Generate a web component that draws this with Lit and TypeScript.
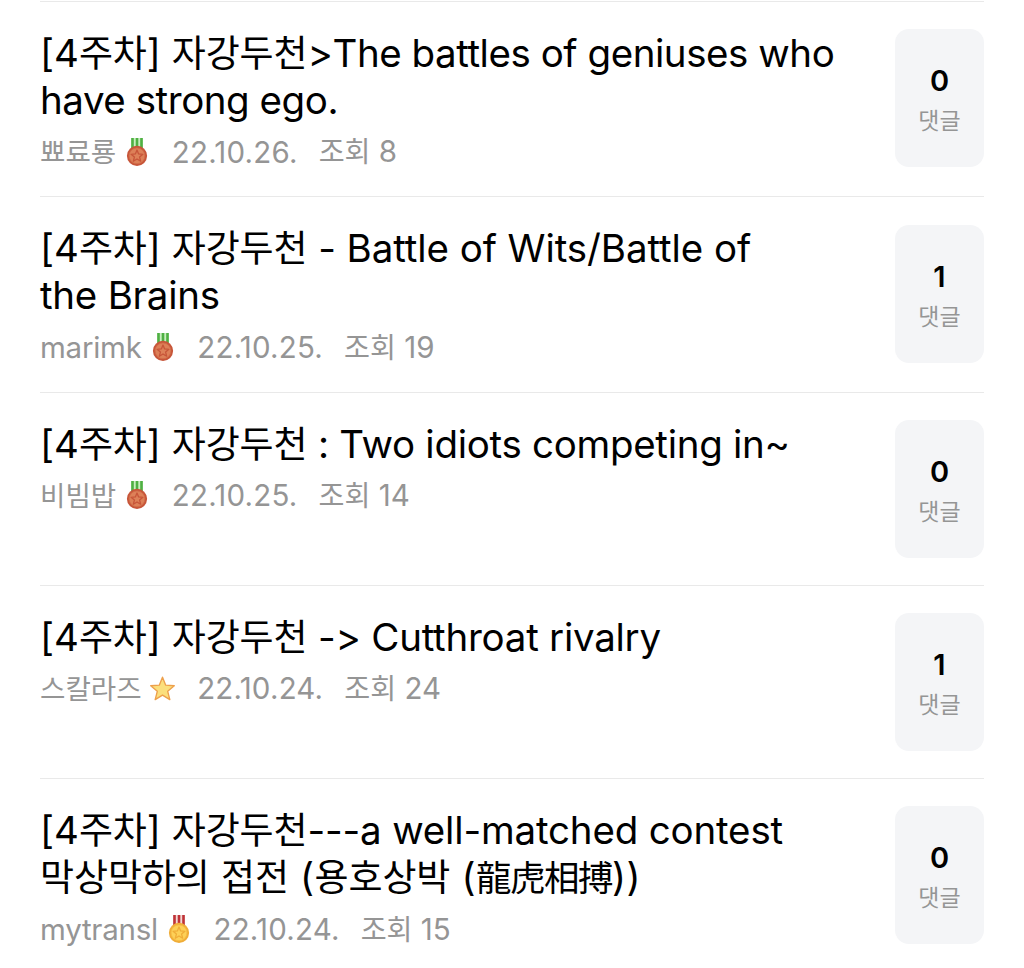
import {LitElement, html, svg, css} from 'lit';
import {customElement, property} from 'lit/decorators.js';
import {styleMap} from 'lit/directives/style-map.js';

type Badge = 'bronze' | 'gold' | 'star';

interface Line {
  text: string;
  tracking: number;
}

interface Post {
  title: Line[];
  author: string;
  badge: Badge;
  date: string;
  views: number;
  comments: number;
}

const POSTS: Post[] = [
  {
    title: [
      {text: '[4주차] 자강두천>The battles of geniuses who', tracking: -0.45},
      {text: 'have strong ego.', tracking: -0.45},
    ],
    author: '뾰료룡',
    badge: 'bronze',
    date: '22.10.26.',
    views: 8,
    comments: 0,
  },
  {
    title: [
      {text: '[4주차] 자강두천 - Battle of Wits/Battle of', tracking: -0.08},
      {text: 'the Brains', tracking: -0.25},
    ],
    author: 'marimk',
    badge: 'bronze',
    date: '22.10.25.',
    views: 19,
    comments: 1,
  },
  {
    title: [{text: '[4주차] 자강두천 : Two idiots competing in~', tracking: -0.29}],
    author: '비빔밥',
    badge: 'bronze',
    date: '22.10.25.',
    views: 14,
    comments: 0,
  },
  {
    title: [{text: '[4주차] 자강두천 -> Cutthroat rivalry', tracking: -0.25}],
    author: '스칼라즈',
    badge: 'star',
    date: '22.10.24.',
    views: 24,
    comments: 1,
  },
  {
    title: [
      {text: '[4주차] 자강두천---a well-matched contest', tracking: -0.17},
      {text: '막상막하의 접전 (용호상박 (龍虎相搏))', tracking: 0.4},
    ],
    author: 'mytransl',
    badge: 'gold',
    date: '22.10.24.',
    views: 15,
    comments: 0,
  },
];

// Hangul and hanja runs are set in their own size and tracking
const mixed = (text: string) =>
  text.split(/([\uac00-\ud7a3]+|[\u4e00-\u9fff]+)/).map((part, i) => {
    if (i % 2 === 0) return part;
    return part >= '\uac00'
      ? html`<span class="hangul">${part}</span>`
      : html`<span class="hanja">${part}</span>`;
  });

const STAR_POINTS =
  '0,-10 2.6,-3.6 9.5,-3.1 4.2,1.4 5.9,8.1 0,4.4 -5.9,8.1 -4.2,1.4 -9.5,-3.1 -2.6,-3.6';

@customElement('user-badge')
class UserBadge extends LitElement {
  static styles = css`
    :host {
      display: block;
      width: 28px;
      height: 32px;
    }
    .icon {
      display: block;
    }
  `;

  @property() kind: Badge = 'bronze';

  medal(ribbon: string, gap: string, edge: string, face: string, ring: string) {
    return svg`
      <rect x="8.2" y="2" width="11.6" height="10" fill=${gap}/>
      <path d="M9.5 2v10M14 2v10M18.5 2v10" stroke=${ribbon} stroke-width="2.6"/>
      <circle cx="14" cy="19.8" r="10.1" fill=${edge}/>
      <circle cx="14" cy="19.8" r="7.9" fill=${face} stroke=${ring} stroke-width=".8"/>
      <polygon points=${STAR_POINTS} transform="translate(14 20.2) scale(.62)"
        fill=${face} stroke=${edge} stroke-width="2.1" stroke-linejoin="round"/>
    `;
  }

  star() {
    return svg`
      <polygon points=${STAR_POINTS} transform="translate(13.5 17.6) scale(1.24)"
        fill="#fbdf7c" stroke="#eda04c" stroke-width="1.1" stroke-linejoin="round"/>
    `;
  }

  render() {
    return html`
      <svg class="icon" width="28" height="32" viewBox="0 0 28 32">
        ${this.kind === 'star'
          ? this.star()
          : this.kind === 'gold'
            ? this.medal('#bf3238', '#f3d9d4', '#f0ad38', '#fdd057', '#f6bd45')
            : this.medal('#4fb043', '#c9efc0', '#c75539', '#dd8058', '#d06c48')}
      </svg>
    `;
  }
}

@customElement('post-row')
class PostRow extends LitElement {
  static styles = css`
    :host {
      display: flex;
      justify-content: space-between;
      box-sizing: border-box;
      height: 193px;
      border-top: 1px solid #e9e9e9;
      padding-top: 27.4px;
    }
    :host([tall]) {
      height: 195.45px;
    }
    .title {
      padding-top: 0.6px;
      font-size: 38.5px;
      line-height: 47px;
      color: #000;
      white-space: nowrap;
    }
    .title .hangul {
      font-size: 37px;
      letter-spacing: -0.1px;
    }
    .title .hanja {
      font-size: 35.5px;
      letter-spacing: -1.5px;
    }
    .meta {
      display: flex;
      align-items: center;
      height: 40px;
      margin-top: 7.6px;
      font-size: 29.5px;
      line-height: 40px;
      color: #959595;
      white-space: nowrap;
    }
    .meta .hangul {
      font-size: 27.6px;
      letter-spacing: 0;
    }
    .author {
      letter-spacing: -0.25px;
    }
    .badge {
      margin: 0 20.6px 0 7px;
    }
    .date {
      margin-right: 21px;
      letter-spacing: 0.2px;
    }
    .views .hangul {
      font-size: 28.2px;
    }
    .count {
      display: flex;
      flex-direction: column;
      align-items: center;
      box-sizing: border-box;
      width: 89px;
      height: 138px;
      padding-top: 32px;
      border-radius: 14px;
      background: #f4f5f7;
    }
    .number {
      font-size: 29px;
      font-weight: 600;
      line-height: 40px;
      color: #000;
    }
    .label {
      font-size: 23px;
      line-height: 40px;
      color: #959595;
    }
  `;

  @property({attribute: false}) post!: Post;

  // The bracketed week tag keeps its natural spacing
  line({text, tracking}: Line) {
    const tag = text.startsWith('[') ? text.slice(0, text.indexOf(']') + 2) : '';
    return html`<div>
      ${mixed(tag)}<span style=${styleMap({letterSpacing: `${tracking}px`})}
        >${mixed(text.slice(tag.length))}</span
      >
    </div>`;
  }

  render() {
    const {title, author, badge, date, views, comments} = this.post;
    return html`
      <div class="body">
        <div class="title">${title.map((line) => this.line(line))}</div>
        <div class="meta">
          <span class="author">${mixed(author)}</span>
          <user-badge class="badge" .kind=${badge}></user-badge>
          <span class="date">${date}</span>
          <span class="views">${mixed(`조회 ${views}`)}</span>
        </div>
      </div>
      <div class="count">
        <span class="number">${comments}</span>
        <span class="label">댓글</span>
      </div>
    `;
  }
}

@customElement('app-root')
class AppRoot extends LitElement {
  static styles = css`
    :host {
      display: block;
      box-sizing: border-box;
      height: 968px;
      padding: 1px 40px 0;
      overflow: hidden;
      background: #fff;
      font-family: Inter, 'Noto Sans CJK KR', sans-serif;
    }
  `;

  render() {
    return html`${POSTS.map(
      (post) => html`<post-row .post=${post} ?tall=${post.title.length > 1}></post-row>`
    )}`;
  }
}
